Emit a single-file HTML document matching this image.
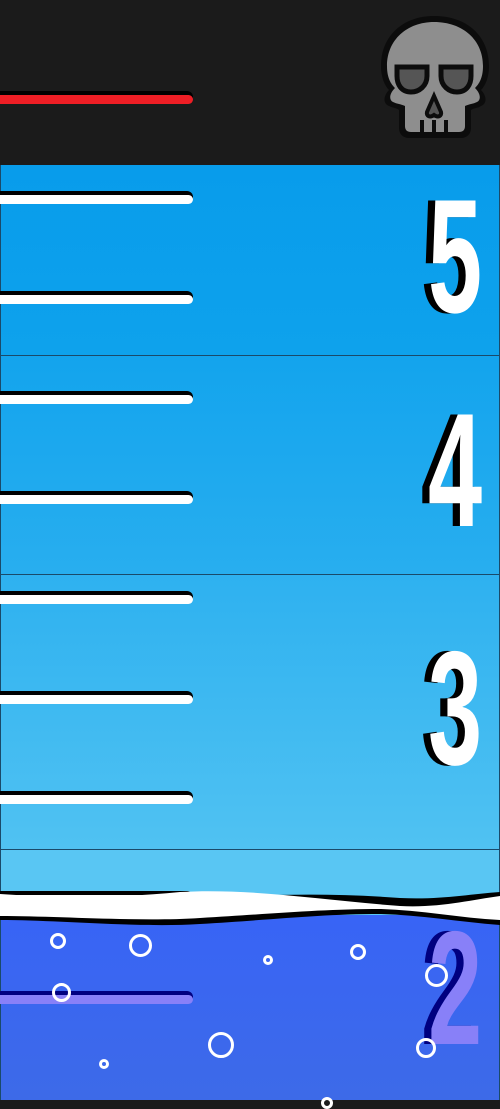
<!DOCTYPE html>
<html><head><style>
*{margin:0;padding:0;box-sizing:border-box}
body{width:500px;height:1100px;overflow:hidden;position:relative;background:#1b1b1b;font-family:"Liberation Sans Narrow","Liberation Sans",sans-serif}
.sec{position:absolute;left:0;width:500px;border-left:1px solid #1a4a6a;border-right:1px solid #1a4a6a}
.ln{position:absolute;left:0;width:193px;height:13px;background:#000;border-radius:0 6px 6px 0}
.ln i{position:absolute;left:0;bottom:0;width:193px;height:9px;background:#fff;border-radius:0 5px 5px 0}
.num{position:absolute;right:18px;font-weight:bold;color:#fff;font-size:162px;line-height:1;transform:scaleX(0.6);transform-origin:right top;text-shadow:-12px 0 0 #000}
.b{position:absolute;border:3px solid #fff;border-radius:50%}
</style></head><body>
<div class="sec" style="top:165px;height:191px;background:linear-gradient(#089ceb,#0ea2ec);border-bottom:1px solid #1a4a6a"></div>
<div class="sec" style="top:356px;height:219px;background:linear-gradient(#13a4ed,#28aeef);border-bottom:1px solid #1a4a6a"></div>
<div class="sec" style="top:575px;height:275px;background:linear-gradient(#2eb1f0,#50c2f2);border-bottom:1px solid #1a4a6a"></div>
<div class="sec" style="top:850px;height:80px;background:#59c6f3"></div>
<div class="sec" style="top:915px;height:185px;background:linear-gradient(#3864f6,#3d6ae8)"></div>

<div class="ln" style="top:91px"><i style="background:#ee1e25"></i></div>
<div class="ln" style="top:191px"><i></i></div>
<div class="ln" style="top:291px"><i></i></div>
<div class="ln" style="top:391px"><i></i></div>
<div class="ln" style="top:491px"><i></i></div>
<div class="ln" style="top:591px"><i></i></div>
<div class="ln" style="top:691px"><i></i></div>
<div class="ln" style="top:791px"><i></i></div>
<div class="ln" style="top:891px"><i></i></div>
<div class="ln" style="top:991px;background:#000080"><i style="background:#8880f8"></i></div>

<div class="num" style="top:176px">5</div>
<div class="num" style="top:390px">4</div>
<div class="num" style="top:628px">3</div>
<div class="num" style="top:908px;color:#8880f8;text-shadow:-12px 0 0 #000080">2</div>

<svg style="position:absolute;left:0;top:880px" width="500" height="60">
<path d="M0,30 C60,28 120,25 180,20 C250,15 320,12 400,18 C440,20 470,14 500,12 L500,45 C460,42 420,35 380,34 C320,34 270,40 200,44 C140,48 60,40 0,40 Z" fill="#000"/>
<path d="M0,14 C60,18 120,18 180,12 C250,8 320,20 400,26 C440,28 470,20 500,16 L500,40 C460,38 420,30 380,29 C320,29 270,34 200,38 C140,42 60,36 0,36 Z" fill="#fff"/>
</svg>

<div class="b" style="left:50px;top:933px;width:16px;height:16px"></div>
<div class="b" style="left:129px;top:934px;width:23px;height:23px"></div>
<div class="b" style="left:263px;top:955px;width:10px;height:10px"></div>
<div class="b" style="left:350px;top:944px;width:16px;height:16px"></div>
<div class="b" style="left:425px;top:964px;width:23px;height:23px"></div>
<div class="b" style="left:52px;top:983px;width:19px;height:19px"></div>
<div class="b" style="left:208px;top:1032px;width:26px;height:26px"></div>
<div class="b" style="left:99px;top:1059px;width:10px;height:10px"></div>
<div class="b" style="left:416px;top:1038px;width:20px;height:20px"></div>
<div class="b" style="left:321px;top:1097px;width:12px;height:12px"></div>

<svg style="position:absolute;left:375px;top:12px" width="118" height="128" viewBox="0 0 118 128">
<path d="M59,4 C28,4 6,24 6,54 C6,66 10,74 14,78 C8,84 8,92 14,94 C18,96 22,96 24,98 L24,116 C24,122 28,126 34,126 L86,126 C92,126 96,122 96,116 L96,98 C98,96 104,96 106,94 C112,92 112,84 106,78 C110,74 114,66 114,54 C114,24 92,4 59,4 Z" fill="#0c0c0c"/>
<path d="M59,10 C32,10 12,28 12,54 C12,66 16,72 20,76 C14,82 14,88 18,90 C22,92 26,92 30,94 L30,114 C30,118 32,120 36,120 L84,120 C88,120 90,118 90,114 L90,94 C94,92 98,92 102,90 C106,88 106,82 100,76 C104,72 108,66 108,54 C108,28 88,10 59,10 Z" fill="#8e8e8e"/>
<path d="M22,55 L52,55 L52,64 C52,74 44,80 36,80 C26,80 22,72 22,64 Z M66,55 L96,55 L96,64 C96,72 92,80 82,80 C74,80 66,74 66,64 Z" fill="#555" stroke="#0c0c0c" stroke-width="5"/>
<path d="M59,84 L52,100 C51,104 55,106 59,103 C63,106 67,104 66,100 Z" fill="#555" stroke="#0c0c0c" stroke-width="4"/>
<path d="M47,108 L47,122 M59,108 L59,122 M71,108 L71,122" stroke="#0c0c0c" stroke-width="4"/>
</svg>
</body></html>
